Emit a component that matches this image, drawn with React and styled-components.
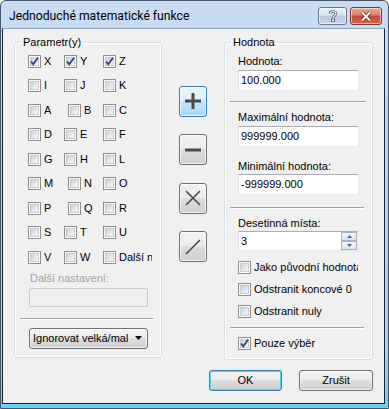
import React from 'react';
import styled, { createGlobalStyle } from 'styled-components';

const GlobalStyle = createGlobalStyle`
  html, body {
    margin: 0;
    padding: 0;
    background: #ffffff;
  }
  body {
    font-family: "Liberation Sans", Arial, sans-serif;
    font-size: 11px;
    color: #000;
  }
`;

const Window = styled.div`
  box-sizing: border-box;
  width: 389px;
  height: 409px;
  display: flex;
  flex-direction: column;
  padding: 0 3px 4px 1px;
  border: 1px solid #44556a;
  border-radius: 6px 6px 0 0;
  background: linear-gradient(#cadcf0 0%, #bcd3ec 40%, #a6d3ee 85%, #62d3f0 100%);
`;

const TitleBar = styled.div`
  height: 27px;
  display: flex;
  align-items: center;
  padding-left: 7px;
  padding-right: 3px;
`;

const TitleText = styled.div`
  flex: 1;
  font-family: Roboto, "Noto Sans", sans-serif;
  font-size: 12.2px;
  color: #000;
  padding-top: 3px;
`;

const CaptionButton = styled.div`
  box-sizing: border-box;
  width: ${p => p.$w}px;
  height: 18px;
  margin-top: 3px;
  margin-left: ${p => p.$ml || 0}px;
  border: 1px solid ${p => (p.$close ? '#7a3a32' : '#68788a')};
  border-radius: 3px;
  display: flex;
  align-items: center;
  justify-content: center;
  background: ${p =>
    p.$close
      ? 'linear-gradient(#e8a495 0%, #d88672 45%, #c24a37 50%, #d2664e 100%)'
      : 'linear-gradient(#eef3f8 0%, #d8e2ec 45%, #bccadb 50%, #c8d6e4 100%)'};
  box-shadow: inset 0 0 0 1px rgba(255, 255, 255, 0.55);
`;

const Client = styled.div`
  flex: 1;
  display: flex;
  flex-direction: column;
  background: #f0f0f0;
  border: 1px solid #1c2633;
  border-top-color: #8fa5bd;
  padding: 7px 11px 0 11px;
`;

const TopRow = styled.div`
  display: flex;
  align-items: flex-start;
`;

const GroupBox = styled.fieldset`
  box-sizing: border-box;
  width: ${p => p.$w}px;
  margin: 0;
  padding: 0 0 ${p => p.$pb}px 0;
  border: 1px solid #d5dfe5;
  border-radius: 3px;
  box-shadow: inset 0 0 0 1px #ffffff;
  min-width: 0;
`;

const Legend = styled.legend`
  margin-left: 6px;
  padding: 0 2px;
  line-height: 13px;
  font-size: 11px;
`;

const CheckGrid = styled.div`
  display: grid;
  grid-template-columns: 36px 39px 49px;
  grid-auto-rows: 24.5px;
  margin-left: 13px;
`;

const CheckItem = styled.div`
  display: flex;
  align-items: center;
  overflow: hidden;
  white-space: nowrap;
  padding-left: ${p => (p.$nudge ? 4 : 0)}px;
  height: ${p => p.$h || 24.5}px;
  margin-top: ${p => p.$mt || 0}px;
  margin-left: ${p => p.$ml || 0}px;
  width: ${p => (p.$w ? `${p.$w}px` : 'auto')};
`;

const Box = styled.span`
  box-sizing: border-box;
  flex: none;
  width: 13px;
  height: 13px;
  border: 1px solid #8e8f8f;
  background: linear-gradient(135deg, #f6f6f6, #ffffff);
  display: flex;
  align-items: center;
  justify-content: center;
  position: relative;
`;

const BoxInner = styled.span`
  width: 9px;
  height: 9px;
  box-sizing: border-box;
  border: 1px solid #c9ccd1;
  background: linear-gradient(135deg, #cbcfd5 0%, #e7e9ec 60%, #f4f4f4 100%);
`;

const CheckMark = styled.svg`
  position: absolute;
  left: 0;
  top: 0;
`;

const CheckText = styled.span`
  margin-left: 3px;
  line-height: 13px;
`;

const FieldLabel = styled.div`
  line-height: 13px;
  margin-top: ${p => p.$mt}px;
  margin-left: ${p => p.$ml}px;
  color: ${p => (p.$disabled ? '#a3a3a3' : '#000')};
`;

const TextBox = styled.div`
  box-sizing: border-box;
  width: ${p => p.$w}px;
  height: ${p => p.$h}px;
  margin-top: ${p => p.$mt}px;
  margin-left: ${p => p.$ml}px;
  border: 1px solid #e3e9ef;
  border-top-color: #abadb3;
  border-left-color: #dbdfe6;
  background: ${p => (p.$disabled ? '#f0f0f0' : '#ffffff')};
  display: flex;
  align-items: center;
  padding-left: 2px;
  line-height: 13px;
  ${p => p.$disabled && 'border-color: #c7ccd1; border-radius: 2px;'}
`;

const Separator = styled.div`
  height: 0;
  border-top: 1px solid #a0a0a0;
  border-bottom: 1px solid #ffffff;
  margin-top: ${p => p.$mt}px;
  margin-left: 5px;
  width: ${p => p.$w}px;
`;

const ComboBox = styled.div`
  box-sizing: border-box;
  width: 119px;
  height: 21px;
  margin-top: 8px;
  margin-left: 14px;
  border: 1px solid #707070;
  border-radius: 3px;
  background: linear-gradient(#f2f2f2 0%, #ebebeb 49%, #dddddd 50%, #cfcfcf 100%);
  box-shadow: inset 0 0 0 1px rgba(255, 255, 255, 0.7);
  display: flex;
  align-items: center;
  padding-left: 3px;
  padding-right: 5px;
`;

const ComboText = styled.span`
  flex: 1;
  overflow: hidden;
  white-space: nowrap;
  margin-right: 7px;
`;

const ToolColumn = styled.div`
  display: flex;
  flex-direction: column;
  gap: 17.5px;
  margin: 49.5px 17px 0 17px;
`;

const ToolButton = styled.div`
  box-sizing: border-box;
  width: 28px;
  height: 31px;
  border: 1px solid ${p => (p.$hot ? '#3c7fb1' : '#707070')};
  border-radius: 3px;
  display: flex;
  align-items: center;
  justify-content: center;
  background: ${p =>
    p.$hot
      ? 'linear-gradient(#eaf6fd 0%, #d9f0fc 49%, #bee6fd 50%, #a7d9f5 100%)'
      : 'linear-gradient(#f2f2f2 0%, #ebebeb 49%, #dddddd 50%, #cfcfcf 100%)'};
  box-shadow: inset 0 0 0 1px rgba(255, 255, 255, 0.7);
`;

const SpinBox = styled.div`
  box-sizing: border-box;
  width: 120px;
  height: 20px;
  margin-top: 1px;
  margin-left: 13px;
  border: 1px solid #e3e9ef;
  border-top-color: #abadb3;
  border-left-color: #dbdfe6;
  background: #fff;
  display: flex;
  align-items: stretch;
`;

const SpinValue = styled.div`
  flex: 1;
  display: flex;
  align-items: center;
  padding-left: 2px;
`;

const SpinButtons = styled.div`
  width: 16px;
  display: flex;
  flex-direction: column;
`;

const SpinArrow = styled.div`
  flex: 1;
  box-sizing: border-box;
  border: 1px solid #a9b3bf;
  background: linear-gradient(#f3f5f8, #dde3ea);
  display: flex;
  align-items: center;
  justify-content: center;
`;

const ButtonRow = styled.div`
  display: flex;
  justify-content: flex-end;
  gap: 17px;
  margin-top: 10px;
`;

const DialogButton = styled.div`
  box-sizing: border-box;
  width: ${p => p.$w}px;
  height: 21px;
  border: 1px solid ${p => (p.$default ? '#3c7fb1' : '#707070')};
  border-radius: 3px;
  display: flex;
  align-items: center;
  justify-content: center;
  background: linear-gradient(#f2f2f2 0%, #ebebeb 49%, #dddddd 50%, #cfcfcf 100%);
  box-shadow: ${p =>
    p.$default ? 'inset 0 0 0 1px #48d8fb' : 'inset 0 0 0 1px rgba(255, 255, 255, 0.7)'};
`;

const Check = ({ checked }) => (
  <Box>
    <BoxInner />
    {checked && (
      <CheckMark width="11" height="11" viewBox="0 0 11 11">
        <path d="M2 5.5 L4.3 8.3 L9 1.8" fill="none" stroke="#2f4379" strokeWidth="1.8" />
      </CheckMark>
    )}
  </Box>
);

const params = [
  ['X', 'Y', 'Z'],
  ['I', 'J', 'K'],
  ['A', 'B', 'C'],
  ['D', 'E', 'F'],
  ['G', 'H', 'L'],
  ['M', 'N', 'O'],
  ['P', 'Q', 'R'],
  ['S', 'T', 'U'],
  ['V', 'W', 'Další nastavení'],
];

const checkedParams = ['X', 'Y', 'Z'];
const nudged = ['B', 'N', 'Q'];

const options = [
  { label: 'Jako původní hodnota', mt: 6 },
  { label: 'Odstranit koncové 0' },
  { label: 'Odstranit nuly' },
];

const App = () => (
  <>
    <GlobalStyle />
    <Window>
      <TitleBar>
        <TitleText>Jednoduché matematické funkce</TitleText>
        <CaptionButton $w={29}>
          <svg width="10" height="12" viewBox="0 0 10 12">
            <path
              d="M2 3.5 C2 1 8 1 8 3.5 C8 5.5 5 5.5 5 8"
              fill="none"
              stroke="#3a4a5c"
              strokeWidth="2.6"
            />
            <path
              d="M2 3.5 C2 1 8 1 8 3.5 C8 5.5 5 5.5 5 8"
              fill="none"
              stroke="#ffffff"
              strokeWidth="1.2"
            />
            <rect x="3.6" y="9" width="2.8" height="2.8" fill="#ffffff" stroke="#3a4a5c" strokeWidth="0.8" />
          </svg>
        </CaptionButton>
        <CaptionButton $w={32} $ml={3} $close>
          <svg width="14" height="11" viewBox="0 0 14 11">
            <path d="M3 1.5 L11 9.5 M11 1.5 L3 9.5" stroke="#5a2a22" strokeWidth="3.6" />
            <path d="M3 1.5 L11 9.5 M11 1.5 L3 9.5" stroke="#ffffff" strokeWidth="2" />
          </svg>
        </CaptionButton>
      </TitleBar>
      <Client>
        <TopRow>
          <GroupBox $w={148} $pb={8}>
            <Legend>Parametr(y)</Legend>
            <CheckGrid>
              {params.flat().map(name => (
                <CheckItem key={name} $nudge={nudged.includes(name)}>
                  <Check checked={checkedParams.includes(name)} />
                  <CheckText>{name}</CheckText>
                </CheckItem>
              ))}
            </CheckGrid>
            <FieldLabel $mt={2.5} $ml={15} $disabled>
              Další nastavení:
            </FieldLabel>
            <TextBox $w={119} $h={19} $mt={2.5} $ml={14} $disabled />
            <Separator $mt={11} $w={133} />
            <ComboBox>
              <ComboText>Ignorovat velká/malá písmena</ComboText>
              <svg width="7" height="4" viewBox="0 0 7 4">
                <path d="M0 0 H7 L3.5 4 Z" fill="#000" />
              </svg>
            </ComboBox>
          </GroupBox>

          <ToolColumn>
            <ToolButton $hot>
              <svg width="16" height="16" viewBox="0 0 16 16">
                <path d="M8 0 V16 M0 8 H16" stroke="#4a4a4a" strokeWidth="3" />
              </svg>
            </ToolButton>
            <ToolButton>
              <svg width="16" height="16" viewBox="0 0 16 16">
                <path d="M0 8 H16" stroke="#4a4a4a" strokeWidth="3" />
              </svg>
            </ToolButton>
            <ToolButton>
              <svg width="16" height="16" viewBox="0 0 16 16">
                <path d="M1 1 L15 15 M15 1 L1 15" stroke="#4a4a4a" strokeWidth="1.6" />
              </svg>
            </ToolButton>
            <ToolButton>
              <svg width="16" height="16" viewBox="0 0 16 16">
                <path d="M1 15 L15 1" stroke="#4a4a4a" strokeWidth="1.6" />
              </svg>
            </ToolButton>
          </ToolColumn>

          <GroupBox $w={149} $pb={4}>
            <Legend>Hodnota</Legend>
            <FieldLabel $mt={6} $ml={13}>Hodnota:</FieldLabel>
            <TextBox $w={121} $h={21} $mt={1.5} $ml={13}>100.000</TextBox>
            <Separator $mt={10} $w={136} />
            <FieldLabel $mt={8} $ml={13}>Maximální hodnota:</FieldLabel>
            <TextBox $w={121} $h={21} $mt={2} $ml={13}>999999.000</TextBox>
            <FieldLabel $mt={13} $ml={13}>Minimální hodnota:</FieldLabel>
            <TextBox $w={121} $h={21} $mt={1} $ml={13}>-999999.000</TextBox>
            <Separator $mt={12} $w={134} />
            <FieldLabel $mt={8} $ml={13}>Desetinná místa:</FieldLabel>
            <SpinBox>
              <SpinValue>3</SpinValue>
              <SpinButtons>
                <SpinArrow>
                  <svg width="5" height="3" viewBox="0 0 5 3">
                    <path d="M0 3 H5 L2.5 0 Z" fill="#3d6aa6" />
                  </svg>
                </SpinArrow>
                <SpinArrow>
                  <svg width="5" height="3" viewBox="0 0 5 3">
                    <path d="M0 0 H5 L2.5 3 Z" fill="#3d6aa6" />
                  </svg>
                </SpinArrow>
              </SpinButtons>
            </SpinBox>
            {options.map(o => (
              <CheckItem key={o.label} $h={22} $mt={o.mt} $ml={13} $w={120}>
                <Check />
                <CheckText>{o.label}</CheckText>
              </CheckItem>
            ))}
            <Separator $mt={4} $w={134} />
            <CheckItem $h={22} $mt={4} $ml={13} $w={120}>
              <Check checked />
              <CheckText>Pouze výběr</CheckText>
            </CheckItem>
          </GroupBox>
        </TopRow>
        <ButtonRow>
          <DialogButton $w={73} $default>OK</DialogButton>
          <DialogButton $w={74}>Zrušit</DialogButton>
        </ButtonRow>
      </Client>
    </Window>
  </>
);

export default App;
